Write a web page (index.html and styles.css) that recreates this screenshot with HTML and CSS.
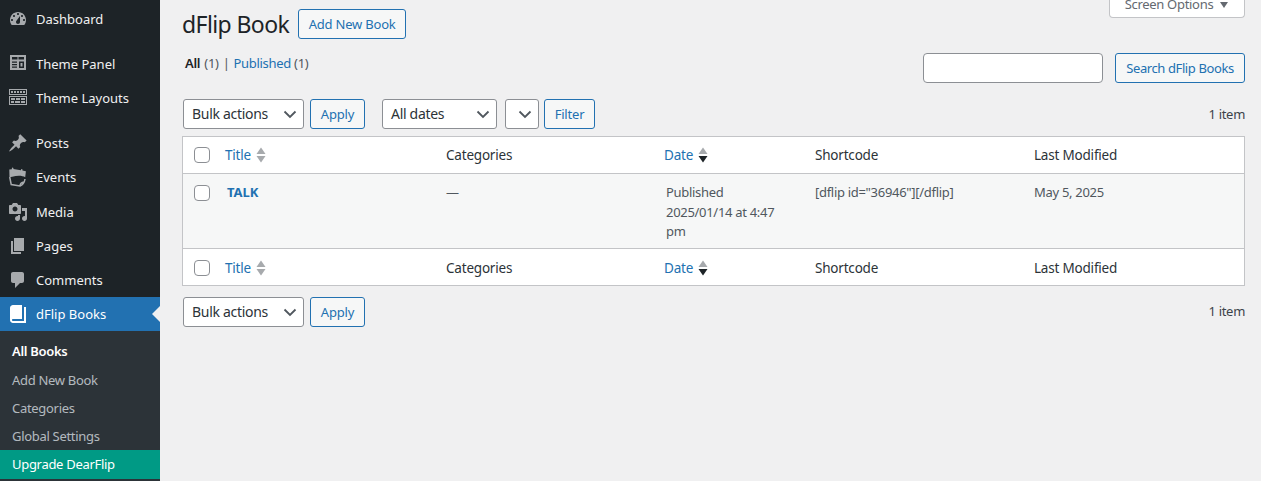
FILE: index.html
```html
<!DOCTYPE html>
<html lang="en">
<head>
<meta charset="utf-8">
<title>dFlip Book</title>
<link rel="stylesheet" href="styles.css">
</head>
<body>
<div class="app">
<nav class="sidebar">
  <ul class="menu menu-first">
    <li class="item"><svg class="ico" viewBox="0 0 20 20"><path fill-rule="evenodd" d="M3.76 16h12.48c1.1-1.37 1.76-3.11 1.76-5 0-4.42-3.58-8-8-8s-8 3.58-8 8c0 1.89.66 3.63 1.76 5zM10 4c.55 0 1 .45 1 1s-.45 1-1 1-1-.45-1-1 .45-1 1-1zM6 6c.55 0 1 .45 1 1s-.45 1-1 1-1-.45-1-1 .45-1 1-1zm8 0c.55 0 1 .45 1 1s-.45 1-1 1-1-.45-1-1 .45-1 1-1zm-5.37 5.55L12 7v6c0 1.1-.9 2-2 2s-2-.9-2-2c0-.57.24-1.08.63-1.45zM4 10c.55 0 1 .45 1 1s-.45 1-1 1-1-.45-1-1 .45-1 1-1zm12 0c.55 0 1 .45 1 1s-.45 1-1 1-1-.45-1-1 .45-1 1-1z"/></svg><span>Dashboard</span></li>
  </ul>
  <ul class="menu">
    <li class="item"><svg class="ico" viewBox="0 0 20 20"><path fill-rule="evenodd" d="M2 1h16v15H2zM4 3h5.500v2.500H4zM10.500 3H16v2.500h-5.500zM4 7.500h5v1.300H4zM4 10h5v1.300H4zM4 12.500h5v1.300H4zM11 7.500h5V14h-5zM12.500 9h2v3.500h-2z"/></svg><span>Theme Panel</span></li>
    <li class="item"><svg class="ico" viewBox="0 0 20 20"><path fill-rule="evenodd" d="M1 1h18v6H1zM2 2v4h16V2zM3 3h2v2H3zM6 3h2v2H6zM9 3h2v2H9zM12 3h2v2h-2zM15 3h2v2h-2zM1 8h18v9H1zM2 9v7h16V9zM3 10h4v2H3zM8 10h4v2H8zM13 10h4v2h-4zM3 13h3v2H3zM7 13h5v2H7zM13 13h4v2h-4z"/></svg><span>Theme Layouts</span></li>
  </ul>
  <ul class="menu menu-last">
    <li class="item"><svg class="ico" viewBox="0 0 20 20"><path d="M10.44 3.020l1.820-1.820 6.360 6.350-1.830 1.820c-1.050-.68-2.480-.57-3.410.36l-.75.75c-.92.93-1.040 2.350-.35 3.410l-1.830 1.820-2.410-2.410-2.800 2.790c-.42.42-3.380 2.710-3.800 2.290s1.860-3.390 2.280-3.810l2.790-2.790L4.100 9.360l1.830-1.820c1.050.69 2.480.57 3.400-.36l.75-.75c.93-.92 1.050-2.350.36-3.410z"/></svg><span>Posts</span></li>
    <li class="item"><svg class="ico" viewBox="0 0 20 20"><path d="M4 .5l1.500.4-.2 1.200 7.600 1.200.2-1.200 1.500.3-.2 1.200 3.500.6-.7 6c-3-2-8-2-13-.5-.9.3-1.900.5-2.700.5L1.300 2.500 3.800 2.300z"/><path class="ico-line" d="M1.700 10l1.500 7.500 8.800 1.500c2.500-1 4.500-3.500 5-7M12 19c0-2 1-3.500 4.200-4"/></svg><span>Events</span></li>
    <li class="item"><svg class="ico" viewBox="0 0 20 20"><path fill-rule="evenodd" d="M13 11V4c0-.55-.45-1-1-1h-1.670L9 1H5L3.670 3H2c-.55 0-1 .45-1 1v7c0 .55.45 1 1 1h10c.55 0 1-.45 1-1zM7 4.500c1.380 0 2.500 1.120 2.500 2.500S8.380 9.500 7 9.500 4.500 8.380 4.500 7 5.620 4.500 7 4.500zM14 6h5v10.500c0 1.380-1.120 2.500-2.500 2.500S14 17.880 14 16.500s1.120-2.500 2.500-2.500c.17 0 .34.020.5.050V9h-3V6zm-4 8.050V13h2v3.500c0 1.380-1.120 2.500-2.500 2.500S7 17.880 7 16.500 8.120 14 9.500 14c.17 0 .34.020.5.050z"/></svg><span>Media</span></li>
    <li class="item"><svg class="ico" viewBox="0 0 20 20"><path d="M6 15V2h10v13H6zm-1 1h8v2H3V5h2v11z"/></svg><span>Pages</span></li>
    <li class="item"><svg class="ico" viewBox="0 0 20 20"><path d="M5 2h9c1.100 0 2 .9 2 2v7c0 1.100-.9 2-2 2h-2l-5 5v-5H5c-1.100 0-2-.9-2-2V4c0-1.100.9-2 2-2z"/></svg><span>Comments</span></li>
    <li class="item item-current"><svg class="ico" viewBox="0 0 20 20"><path d="M16 3h2v16H5c-1.660 0-3-1.340-3-3V4c0-1.660 1.340-3 3-3h9v14H5c-.55 0-1 .45-1 1s.45 1 1 1h11V3z"/></svg><span>dFlip Books</span></li>
  </ul>
  <ul class="submenu">
    <li class="sub sub-current">All Books</li>
    <li class="sub">Add New Book</li>
    <li class="sub">Categories</li>
    <li class="sub">Global Settings</li>
    <li class="sub sub-upgrade">Upgrade DearFlip</li>
  </ul>
</nav>
<main class="content">
  <div class="screen-meta"><button class="screen-options">Screen Options<i class="caret"></i></button></div>
  <div class="heading">
    <h1>dFlip Book</h1>
    <a class="btn btn-add">Add New Book</a>
  </div>
  <div class="filter-row">
    <ul class="views">
      <li class="view-current">All <span class="count">(1)</span></li>
      <li class="sep">|</li>
      <li class="view-published"><a>Published</a> <span class="count">(1)</span></li>
    </ul>
    <div class="search">
      <input class="search-input" type="text" aria-label="Search">
      <a class="btn btn-search">Search dFlip Books</a>
    </div>
  </div>
  <div class="tablenav tablenav-top">
    <div class="control select select-bulk">Bulk actions<svg class="chev" viewBox="0 0 16 16"><path d="M2.500 5.500L8 11l5.500-5.500"/></svg></div>
    <a class="btn btn-apply">Apply</a>
    <div class="control select select-dates">All dates<svg class="chev" viewBox="0 0 16 16"><path d="M2.500 5.500L8 11l5.500-5.500"/></svg></div>
    <div class="control select select-empty"><svg class="chev" viewBox="0 0 16 16"><path d="M2.500 5.500L8 11l5.500-5.500"/></svg></div>
    <a class="btn btn-filter">Filter</a>
    <span class="num">1 item</span>
  </div>
  <table class="list">
    <colgroup><col class="c-check"><col class="c-title"><col class="c-cat"><col class="c-date"><col class="c-short"><col class="c-mod"></colgroup>
    <thead>
      <tr>
        <th class="check"><i class="box"></i></th>
        <th class="col-title"><a>Title</a><svg class="sort" viewBox="0 0 10 16"><path d="M5 .5l4.500 6.500h-9z"/><path d="M5 15.500L9.500 9h-9z"/></svg></th>
        <th>Categories</th>
        <th><a>Date</a><svg class="sort sort-desc" viewBox="0 0 10 16"><path class="up" d="M5 .5l4.500 6.500h-9z"/><path class="down" d="M5 15.500L9.500 9h-9z"/></svg></th>
        <th>Shortcode</th>
        <th>Last Modified</th>
      </tr>
    </thead>
    <tbody>
      <tr>
        <td class="check"><i class="box"></i></td>
        <td class="name"><a>TALK</a></td>
        <td>—</td>
        <td class="date">Published<br>2025/01/14 at 4:47<br>pm</td>
        <td>[dflip id="36946"][/dflip]</td>
        <td>May 5, 2025</td>
      </tr>
    </tbody>
    <tfoot>
      <tr>
        <th class="check"><i class="box"></i></th>
        <th class="col-title"><a>Title</a><svg class="sort" viewBox="0 0 10 16"><path d="M5 .5l4.500 6.500h-9z"/><path d="M5 15.500L9.500 9h-9z"/></svg></th>
        <th>Categories</th>
        <th><a>Date</a><svg class="sort sort-desc" viewBox="0 0 10 16"><path class="up" d="M5 .5l4.500 6.500h-9z"/><path class="down" d="M5 15.500L9.500 9h-9z"/></svg></th>
        <th>Shortcode</th>
        <th>Last Modified</th>
      </tr>
    </tfoot>
  </table>
  <div class="tablenav tablenav-bottom">
    <div class="control select select-bulk">Bulk actions<svg class="chev" viewBox="0 0 16 16"><path d="M2.500 5.500L8 11l5.500-5.500"/></svg></div>
    <a class="btn btn-apply">Apply</a>
    <span class="num">1 item</span>
  </div>
</main>
</div>
</body>
</html>
```
FILE: styles.css
```css
* { box-sizing: border-box; }
html, body { margin: 0; height: 481px; overflow: hidden; }
body { background: #f0f0f1; color: #3c434a; font: 13px/1.4 "Noto Sans", "Open Sans", sans-serif; }
ul { list-style: none; margin: 0; padding: 0; }
a { color: #2271b1; }

.app { display: flex; height: 481px; overflow: hidden; }

.sidebar { width: 160px; flex: none; background: #1d2327; color: #f0f0f1; }
.menu { margin-bottom: 10.8px; }
.menu-last { margin-bottom: 0; }
.menu-first { padding-top: 2px; }
.item { display: flex; align-items: center; height: 34.2px; color: #f0f0f1; position: relative; }
.item span { margin-left: 8px; }
.ico { width: 20px; height: 20px; margin-left: 8px; fill: #a7aaad; flex: none; }
.ico-line { fill: none; stroke: #a7aaad; stroke-width: 1.5; }
.item-current { background: #2271b1; color: #fff; }
.item-current .ico { fill: #fff; }
.item-current::after { content: ""; position: absolute; right: 0; top: 50%; margin-top: -8px; border: 8px solid transparent; border-right-color: #f0f0f1; }
.submenu { background: #2c3338; padding-top: 6.3px; padding-bottom: 3px; }
.sub { padding: 5px 12px; height: 28.2px; font-size: 13px; color: rgba(240,246,252,.7); letter-spacing: -.3px; }
.sub-current { color: #fff; font-weight: 600; padding-top: 4.3px; }
.sub-upgrade { background: #009a85; color: #fff; }

.content { flex: 1; padding: 0 16px 0 22px; min-width: 0; }
.screen-meta { display: flex; justify-content: flex-end; height: 0; }
.screen-options { height: 28px; width: 136px; margin-top: -10px; flex: none; background: #fff; border: 1px solid #c3c4c7; border-top: 0; border-radius: 0 0 4px 4px; color: #646970; font: 13px/1.4 "Noto Sans", sans-serif; letter-spacing: -.3px; padding: 2px 1px 0 0; display: flex; align-items: center; justify-content: center; overflow: hidden; }
.caret { margin-left: 7px; border: 4.500px solid transparent; border-top: 6px solid #646970; border-bottom: 0; }

.heading { display: flex; align-items: center; padding-top: 9px; height: 39px; }
h1 { margin: 0; font-size: 23px; font-weight: 400; line-height: 30px; color: #1d2327; letter-spacing: -.6px; }
.btn { display: inline-flex; align-items: center; justify-content: center; height: 30px; border: 1px solid #2271b1; border-radius: 3px; background: #f6f7f7; color: #2271b1; letter-spacing: -.2px; flex: none; }
.btn-add { width: 108px; margin-left: 9px; }

.filter-row { display: flex; justify-content: space-between; align-items: flex-start; margin-top: 5px; height: 54px; }
.views { display: flex; gap: 5px; padding-left: 3px; padding-top: 10px; letter-spacing: -.3px; }
.view-current { color: #1d2327; font-weight: 600; word-spacing: 1px; margin-right: -1px; }
.view-current .count { font-weight: 400; }
.view-published { margin-left: -1px; }
.count { color: #50575e; }
.sep { color: #50575e; }
.search { display: flex; gap: 12px; margin-top: 9px; }
.search-input { width: 180px; height: 30px; border: 1px solid #8c8f94; border-radius: 4px; background: #fff; padding: 0; margin: 0; }
.btn-search { width: 130px; letter-spacing: -.4px; }

.tablenav { display: flex; align-items: center; height: 30px; }
.tablenav-top { margin-top: 1px; margin-bottom: 7px; }
.tablenav-bottom { margin-top: 11px; }
.tablenav-bottom .num { padding-bottom: 2px; }
.control { height: 30px; border: 1px solid #8c8f94; border-radius: 3px; background: #fff; color: #2c3338; font-size: 14px; display: flex; align-items: center; position: relative; letter-spacing: -.3px; }
.select { padding-left: 8px; }
.chev { position: absolute; right: 5px; top: 6px; width: 16px; height: 16px; fill: none; stroke: #50575e; stroke-width: 1.8; }
.select-bulk { width: 121px; margin-left: 1px; }
.btn-apply { width: 55px; margin-left: 6px; }
.select-dates { width: 115px; margin-left: 17px; }
.select-empty { width: 34px; margin-left: 8px; }
.btn-filter { width: 51px; margin-left: 5px; }
.num { margin-left: auto; color: #3c434a; font-size: 13px; letter-spacing: -.3px; }

.list { width: 1063px; border-collapse: separate; border-spacing: 0; table-layout: fixed; background: #fff; border: 1px solid #c3c4c7; }
.c-check { width: 33px; }
.c-title { width: 220px; }
.c-cat { width: 218px; }
.c-date { width: 151px; }
.c-short { width: 219px; }
.list th, .list td { text-align: left; font-weight: 400; vertical-align: middle; color: #2c3338; }
.list th { padding: 0 10px; font-size: 13.500px; letter-spacing: -.2px; }
.list th.col-title { padding-left: 9px; }
.list thead th { border-bottom: 1px solid #c3c4c7; height: 37px; }
.list tfoot th { border-top: 1px solid #c3c4c7; height: 37px; padding-top: 2px; }
.list td { vertical-align: top; padding: 9px 10px 6px; background: #f6f7f7; font-size: 13px; line-height: 19.500px; height: 74px; color: #50575e; letter-spacing: -.3px; }
.list td.date { padding-left: 12px; }
.list td.check { padding-top: 11px; padding-left: 11px; }
.list th.check { padding-left: 11px; }
.list td.name { font-size: 13px; font-weight: 700; padding-left: 11px; padding-top: 9px; letter-spacing: 0; }
.box { display: block; width: 16px; height: 16px; border: 1px solid #8c8f94; border-radius: 4px; background: #fff; }
.sort { width: 10px; height: 16px; margin-left: 5px; vertical-align: -3px; fill: #a7aaad; }
.sort-desc .up { fill: #a7aaad; }
.sort-desc .down { fill: #1d2327; }
```
